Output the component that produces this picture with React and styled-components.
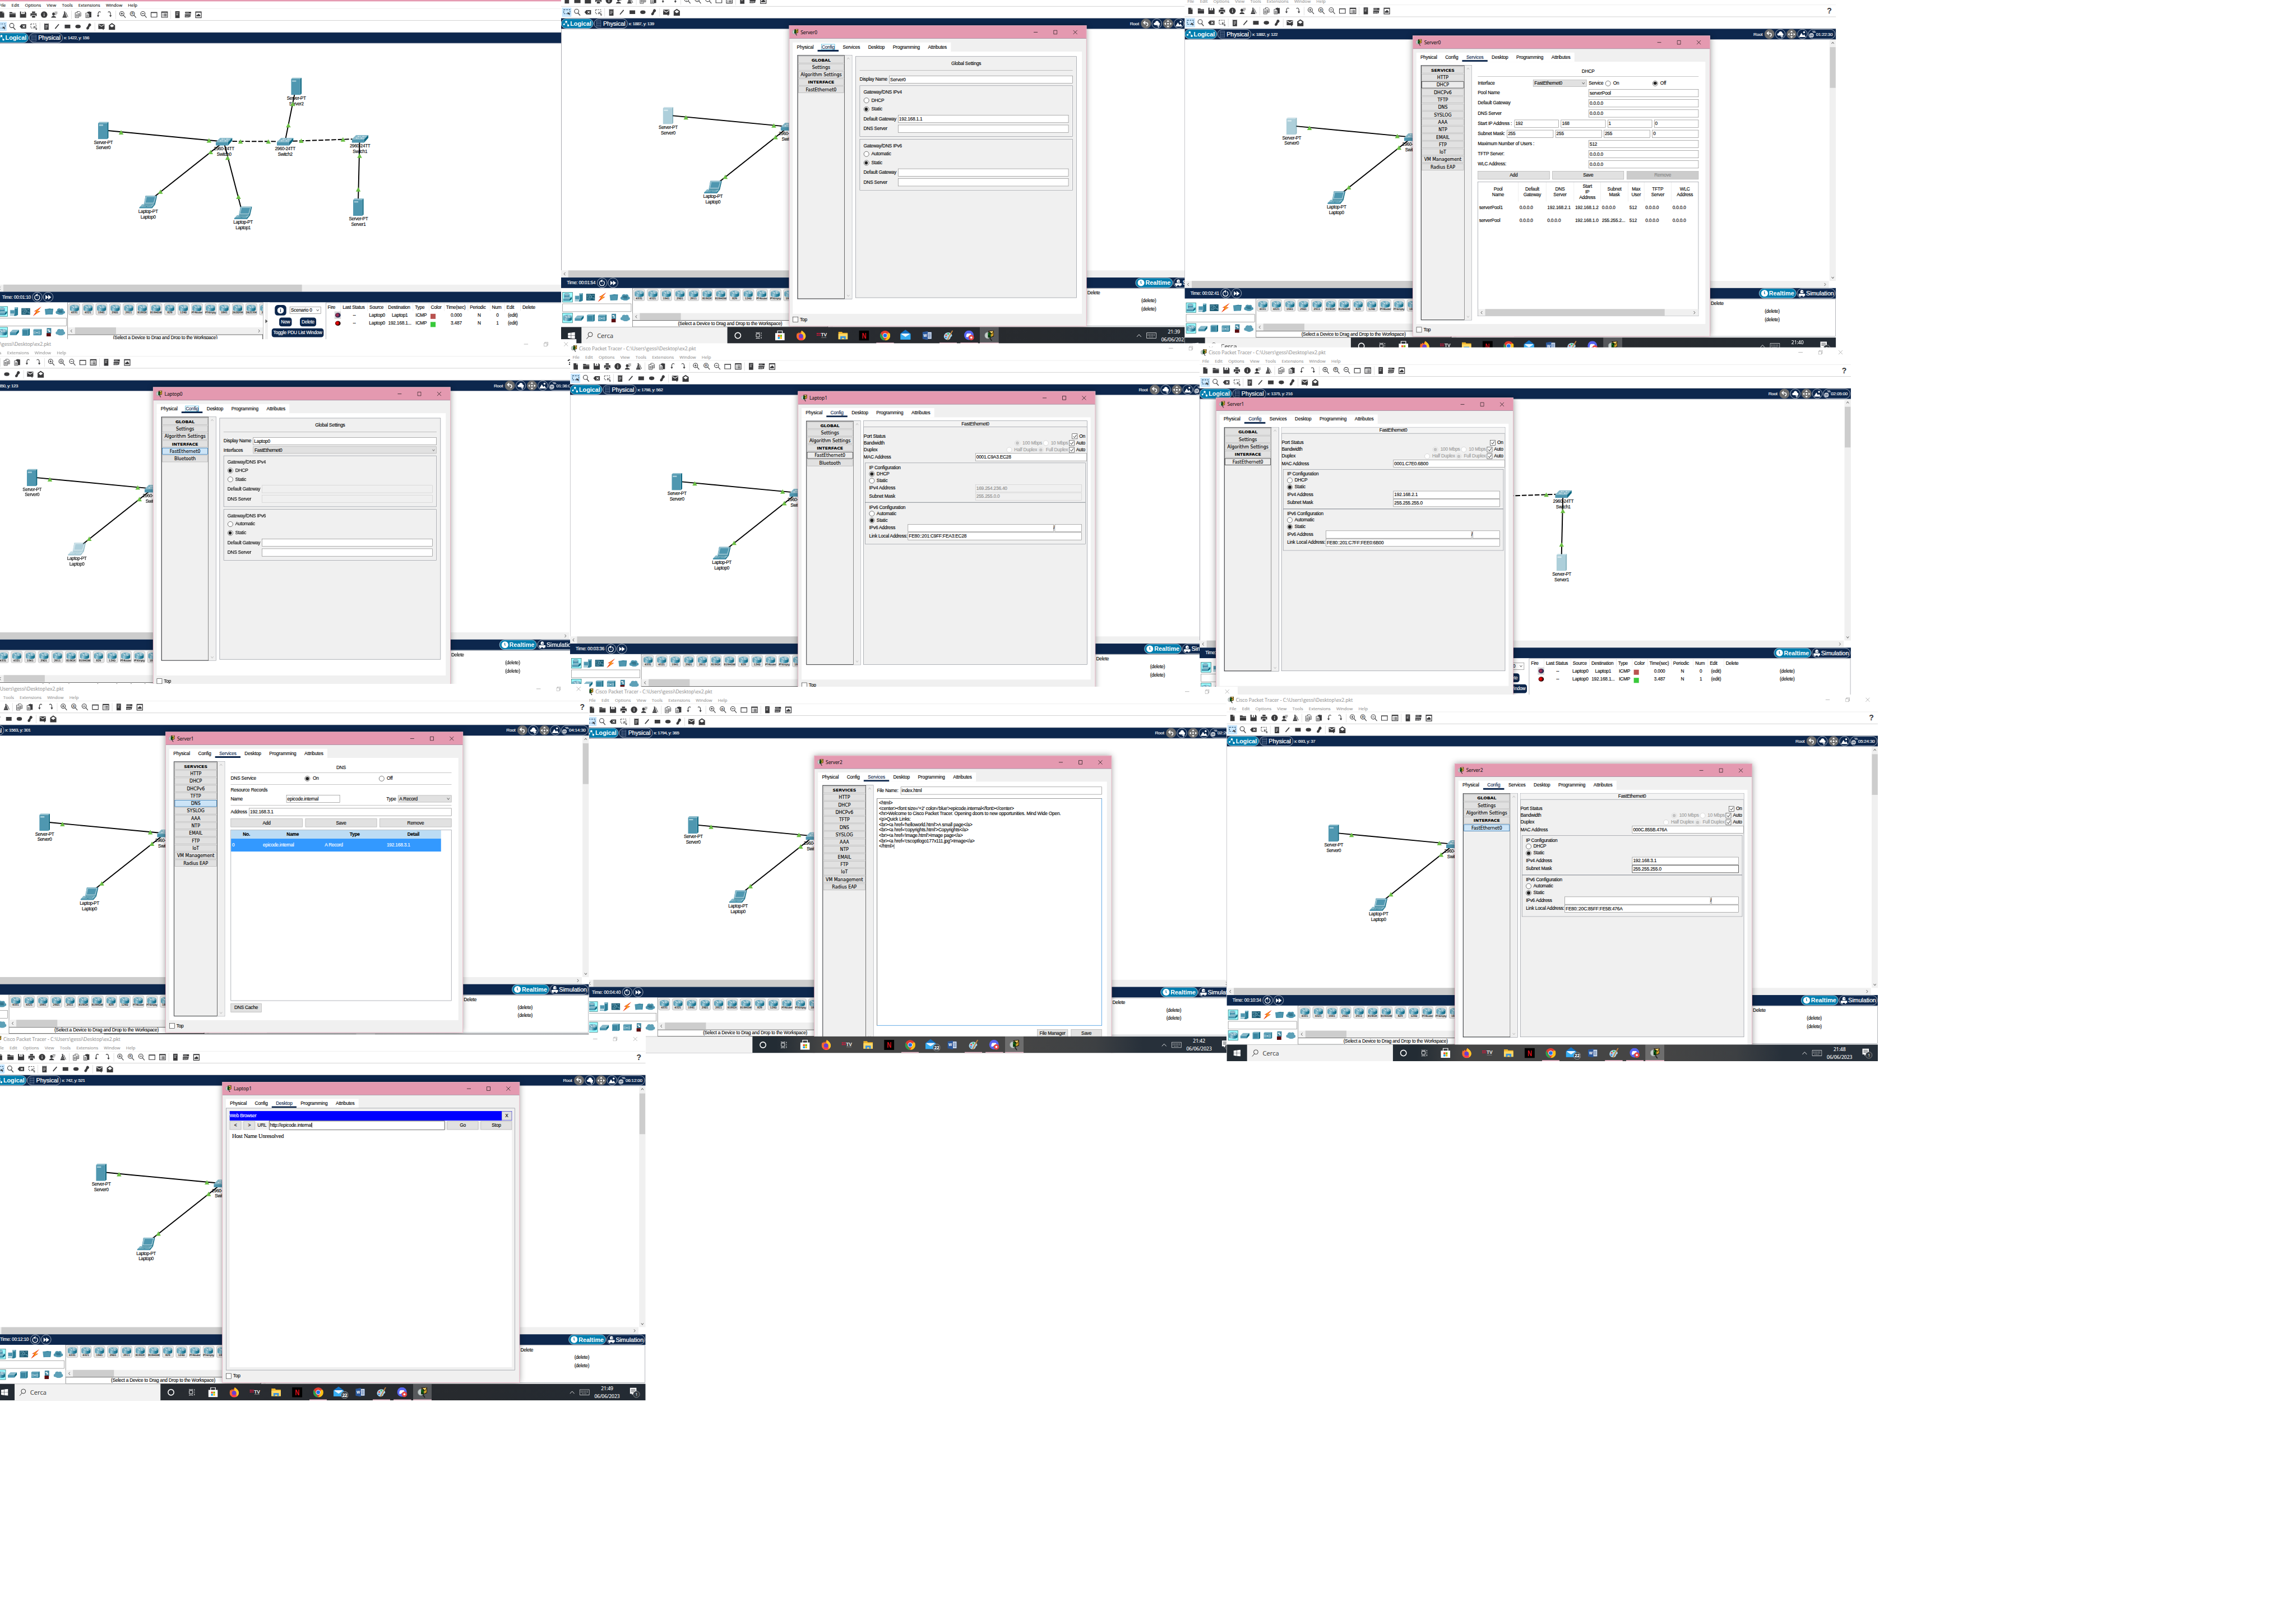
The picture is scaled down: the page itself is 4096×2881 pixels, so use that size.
import React from "react";
import styled, { createGlobalStyle, css } from "styled-components";

const ARIAL = '"Liberation Sans", Arial, sans-serif';
const SEGOE = '"Open Sans", "Noto Sans", sans-serif';
const TAHOMA = '"DejaVu Sans", Tahoma, sans-serif';

const PINK = "#e499b0";
const NAVY = "#0d274d";
const CYAN = "#007dae";
const INK = "#3a3a3c";
const FACE = "#f0f0f0";
const LINE = "#828790";

const GlobalStyle = createGlobalStyle`
  html, body { margin: 0; padding: 0; background: #fff; overflow: hidden; }
  *, *::before, *::after { box-sizing: border-box; }
`;

/* ---------- page ---------- */

const Page = styled.main`
  width: 4096px;
  height: 2881px;
  overflow: hidden;
  background: #fff;
`;

const Board = styled.div`
  position: relative;
  width: 6768px;
  height: 4760px;
  transform: scale(0.6052);
  transform-origin: 0 0;
  font-family: ${ARIAL};
  font-size: 13.8px;
  letter-spacing: -0.36px;
  line-height: 16px;
  color: #000;
  white-space: nowrap;
  -webkit-text-stroke: 0.2px currentColor;
`;

const Shot = styled.section`
  position: absolute;
  isolation: isolate;
  left: ${(p) => p.$x}px;
  top: ${(p) => p.$y}px;
  width: 1920px;
  height: 1080px;
  display: flex;
  flex-direction: column;
  background: #fff;
  overflow: hidden;
`;

/* ---------- main window chrome ---------- */

const TitleBar = styled.header`
  display: flex;
  align-items: center;
  flex: 0 0 30px;
  padding: 0 24px 0 3px;
  gap: 6px;
  font: 14.1px/18px ${SEGOE};
  letter-spacing: 0;
  color: #999;
  background: ${(p) => (p.$active ? PINK : "#fff")};
  border-bottom: 1px solid #fff;
`;

const TitleText = styled.span`
  flex: 1;
`;

const Controls = styled.div`
  display: flex;
  align-items: center;
  gap: ${(p) => p.$gap}px;
`;

const MenuBar = styled.nav`
  display: flex;
  align-items: center;
  flex: 0 0 21px;
  gap: 16.8px;
  padding-left: 8px;
  font: 12.8px/18px ${SEGOE};
  letter-spacing: 0;
  color: ${(p) => (p.$active ? "#111" : "#999")};
  border-bottom: 1px solid #e4e4e4;
`;

const ToolRow = styled.div`
  display: flex;
  align-items: center;
  flex: 0 0 35px;
  padding-left: 4px;
  border-bottom: 1px solid #b8b8b8;
`;

const Tool = styled.span`
  display: flex;
  align-items: center;
  justify-content: center;
  width: 25px;
  height: 24px;
  margin-right: 6px;
  background: ${(p) => (p.$on ? "#cce8ff" : "transparent")};
  outline: ${(p) => (p.$on ? "1px solid #99d1ff" : "none")};
`;

const Divider = styled.i`
  width: 1px;
  height: 25px;
  margin: 0 6px 0 0;
  background: #cfcfcf;
`;

const HelpMark = styled.b`
  margin-left: auto;
  padding-right: 13px;
  font: bold 23px/24px ${ARIAL};
  color: ${INK};
`;

const NavBar = styled.div`
  display: flex;
  align-items: center;
  flex: 0 0 31px;
  padding-right: 2px;
  background: ${NAVY};
  color: #fff;
  font-size: 13.4px;
`;

const Pill = styled.span`
  display: flex;
  align-items: center;
  justify-content: center;
  height: 29px;
  gap: ${(p) => p.$gap || 2}px;
  width: ${(p) => p.$w}px;
  border: 1.3px solid #fff;
  border-radius: 15px;
  background: ${(p) => (p.$on ? CYAN : NAVY)};
  font-size: ${(p) => (p.$on ? 17.8 : 17.6)}px;
  letter-spacing: 0;
  font-weight: ${(p) => (p.$on ? "bold" : "normal")};
  -webkit-text-stroke: ${(p) => (p.$on ? 0 : 0.4)}px #fff;
  margin-right: 2px;
  svg { flex: none; }
`;

const Coords = styled.span`
  flex: 1;
  padding-left: 1px;
  font-size: 13.2px;
  letter-spacing: -0.78px;
`;

const NavButton = styled.span`
  display: flex;
  align-items: center;
  justify-content: center;
  width: 30px;
  height: 29px;
  margin-left: 2.4px;
  border-radius: 15px;
  border: 1.3px solid ${(p) => (p.$grey ? "#6d6d6d" : "#fff")};
  background: ${(p) => (p.$grey ? "#6d6d6d" : NAVY)};
`;

const EnvClock = styled.span`
  display: flex;
  align-items: center;
  width: 80px;
  height: 29px;
  margin-left: 2px;
  border: 1.3px solid #fff;
  border-radius: 15px;
`;

/* ---------- workspace ---------- */

const WorkRow = styled.div`
  display: flex;
  flex: 0 0 712px;
  border-top: 1px solid #9a9eae;
  border-left: 1px solid #70707c;
`;

const Canvas = styled.div`
  position: relative;
  flex: 1;
  overflow: hidden;
`;

const Layer = styled.div`
  position: absolute;
  left: -1px;
  top: ${(p) => p.$dy - 1}px;
  width: 1899px;
  height: 712px;
`;

const Node = styled.div`
  position: absolute;
  left: ${(p) => p.$x - 50}px;
  top: ${(p) => p.$y - 152}px;
  width: 100px;
  display: flex;
  flex-direction: column;
  align-items: center;
  font-size: 13.5px;
  letter-spacing: -0.65px;
  line-height: 16px;
  svg { opacity: ${(p) => (p.$picked ? 0.46 : 1)}; margin-bottom: 2px; }
`;

const ArrowLayer = styled.svg`
  position: absolute;
  left: 0;
  top: 0;
`;

const VScroll = styled.div`
  display: flex;
  flex-direction: column;
  align-items: center;
  justify-content: space-between;
  width: ${(p) => p.$w || 19}px;
  padding: 5px 0;
  background: ${FACE};
`;

const VThumb = styled.i`
  width: 17px;
  height: 120px;
  margin: 8px 0 auto;
  background: #cdcdcd;
`;

const HScroll = styled.div`
  display: flex;
  align-items: center;
  flex: 0 0 ${(p) => p.$h}px;
  padding: 0 7px 0 6px;
  margin-right: ${(p) => p.$mr || 0}px;
  background: ${FACE};
`;

const HThumb = styled.i`
  width: ${(p) => p.$w}px;
  height: 100%;
  margin: 0 auto 0 6px;
  background: #cdcdcd;
`;

const TimeBar = styled.div`
  display: flex;
  align-items: center;
  flex: 0 0 31px;
  padding-left: 17px;
  background: ${NAVY};
  color: #fff;
  font-size: 13.5px;
`;

const TimeText = styled.span`
  width: 89px;
`;

const TimeSpace = styled.span`
  flex: 1;
`;

/* ---------- bottom panel ---------- */

const Bottom = styled.div`
  display: flex;
  flex: 0 0 115px;
`;

const Palette = styled.div`
  display: flex;
  flex-direction: column;
  width: 210px;
  padding: 12px 3px 0 4px;
`;

const PaletteRow = styled.div`
  display: flex;
  gap: 4px;
`;

const PaletteCell = styled.span`
  display: flex;
  align-items: center;
  justify-content: center;
  width: 30px;
  height: 30px;
  background: ${(p) => (p.$on ? "#99fbff" : "transparent")};
  border: ${(p) => (p.$on ? "1px solid #355" : "1px solid transparent")};
`;

const PaletteField = styled.div`
  height: 24px;
  margin: 4px 0 3px;
  border: 1px solid #777;
  background: #fff;
`;

const Devices = styled.div`
  display: flex;
  flex-direction: column;
  width: 576px;
  border-left: 1px solid #555;
  border-top: 1px solid ${LINE};
`;

const Tiles = styled.div`
  display: flex;
  flex: 0 0 73px;
  gap: 6px;
  padding: 2px 0 0 2px;
  overflow: hidden;
`;

const Tile = styled.div`
  display: flex;
  flex: 0 0 34px;
  flex-direction: column;
  align-items: center;
  justify-content: space-between;
  height: 35px;
  padding: 3px 0 2px;
  border: 1px solid #b4b4b4;
  border-radius: 5px;
  background: #e2e2e2;
  font: 7.6px/8px ${TAHOMA};
  letter-spacing: ${(p) => (p.$tight ? -0.5 : 0)}px;
`;

const Hint = styled.div`
  margin-top: 1px;
  height: 20px;
  border: 1.5px solid #000;
  border-left: 0;
  text-align: center;
  line-height: 18px;
`;

const Splitter = styled.div`
  display: flex;
  align-items: center;
  justify-content: center;
  width: 20px;
  padding-bottom: 4px;
  background: linear-gradient(90deg, #fff 6px, ${FACE} 6px 14px, #fff 14px);
  border-left: 1px solid #999;
`;

const Scenario = styled.div`
  display: flex;
  flex-direction: column;
  align-items: center;
  width: 165px;
  padding-top: 8px;
  gap: 6px;
`;

const ScenarioRow = styled.div`
  display: flex;
  align-items: center;
  justify-content: center;
  gap: ${(p) => p.$gap}px;
`;

const NavyButton = styled.span`
  padding: 5px;
  border-radius: 7px;
  background: ${NAVY};
  color: #fff;
  line-height: 16px;
  height: 26px;
`;

const InfoButton = styled.span`
  display: flex;
  align-items: center;
  justify-content: center;
  width: 34px;
  height: 31px;
  border-radius: 9px;
  background: ${NAVY};
`;

const Pdu = styled.div`
  flex: 1;
  margin: 1px 1px 3px 0;
  border: 1px solid ${LINE};
`;

const PduRow = styled.div`
  display: grid;
  grid-template-columns: 44px 79px 55px 79px 47px 45px 70px 65px 43px 47px 1fr;
  align-items: center;
  height: 24px;
  text-align: center;
`;

const PduHead = styled.span`
  height: 24px;
  padding-left: 5px;
  line-height: 26px;
  text-align: left;
  border-right: 1px solid #e2e2e2;
  &:last-child { border: 0; }
`;

const FireCell = styled.span`
  display: flex;
  align-items: center;
  justify-content: center;
  justify-self: end;
  width: 19px;
  height: 22px;
  background: ${(p) => (p.$on ? "#d9d9d9" : "transparent")};
`;

const FireDot = styled.i`
  width: 16px;
  height: 14px;
  border-radius: 50%;
  background: radial-gradient(circle at 40% 45%, ${(p) => p.$c} 22%, ${(p) => p.$edge} 62%);
`;

const Swatch = styled.i`
  width: 15px;
  height: 15px;
  margin: 7px 0 0 4px;
  background: ${(p) => p.$c};
`;

/* ---------- taskbar ---------- */

const Taskbar = styled.footer`
  display: flex;
  align-items: stretch;
  position: relative;
  z-index: 2;
  flex: 0 0 49px;
  background: ${(p) =>
    p.$glow
      ? "linear-gradient(90deg,#232c34 0 560px,#454545 700px 1290px,#3d4043 1500px,#27303a 1640px,#27303a)"
      : "linear-gradient(90deg,#232b33,#292c31 700px,#272a2e 1400px,#232b34)"};
  color: #fff;
`;

const StartCell = styled.span`
  display: flex;
  align-items: center;
  justify-content: center;
  width: 60px;
`;

const SearchCell = styled.span`
  display: flex;
  align-items: center;
  gap: 11px;
  width: 430px;
  padding-left: 13px;
  background: #f2f2f2;
  border-top: 1px solid #c9c9c9;
  color: #444;
  font: 18.2px/24px ${SEGOE};
  letter-spacing: 0;
`;

const AppCell = styled.span`
  display: flex;
  align-items: center;
  justify-content: center;
  width: ${(p) => p.$w || 62}px;
  padding-top: 1px;
  background: ${(p) => (p.$front ? "rgba(255,255,255,.22)" : "transparent")};
  box-shadow: ${(p) => (p.$open ? "inset 0 -3px 0 #edbccb" : "none")};
  background-clip: padding-box;
  border: solid transparent;
  border-width: 0 ${(p) => (p.$front ? 0 : 5)}px;
`;

const Tray = styled.span`
  display: flex;
  align-items: center;
  margin-left: auto;
  padding-right: 16px;
`;

const Clock = styled.span`
  display: flex;
  flex-direction: column;
  align-items: center;
  margin: 0 26px 0 14px;
  font: 14.1px/23px ${SEGOE};
  letter-spacing: 0;
`;

/* ---------- device dialog ---------- */

const DialogBox = styled.article`
  position: absolute;
  left: ${(p) => p.$x}px;
  top: ${(p) => p.$y}px;
  width: 877px;
  height: 887px;
  display: flex;
  flex-direction: column;
  border: 1px solid ${PINK};
  background: ${FACE};
  box-shadow: 0 0 18px rgba(0, 0, 0, 0.42);
`;

const DialogTitle = styled.header`
  display: flex;
  align-items: center;
  gap: 7px;
  flex: 0 0 38px;
  padding: 0 26px 0 8px;
  background: ${PINK};
  border-bottom: 1px solid #8d8fa0;
  font: 13.8px/18px ${SEGOE};
  letter-spacing: 0;
  color: #111;
`;

const TabBar = styled.div`
  display: flex;
  align-self: flex-start;
  margin: 11px 0 0 10px;
  height: 27px;
  background: #fff;
`;

const Tab = styled.span`
  padding: 6px 12px 0;
  border-bottom: 5px solid ${(p) => (p.$on ? NAVY : "transparent")};
  color: ${(p) => (p.$on ? NAVY : "#000")};
  line-height: 16px;
  height: 27px;
  letter-spacing: -0.28px;
`;

const TabLabel = styled.span`
  outline: ${(p) => (p.$focus ? "1.5px solid #1ba7d6" : "none")};
`;

const Content = styled.div`
  display: flex;
  align-items: flex-start;
  flex: 0 0 773px;
  margin: 0 13px 0 10px;
  padding: 10px 0 0 13px;
  background: #fff;
`;

const WebContent = styled(Content)`
  flex-direction: column;
  align-items: stretch;
  padding: 8px 8px 8px 10px;
  background: ${FACE};
  border: 1px solid ${LINE};
`;

const TopRow = styled.label`
  display: flex;
  align-items: center;
  gap: 5px;
  padding: 9px 0 0 10px;
`;

const CheckBox = styled.span`
  display: flex;
  align-items: center;
  justify-content: center;
  flex: none;
  width: 16px;
  height: 16px;
  border: 1.2px solid #222;
  background: #fff;
`;

const Side = styled.aside`
  display: flex;
  flex: 0 0 ${(p) => p.$w}px;
  height: ${(p) => p.$h}px;
  border: 1px solid ${LINE};
  background: ${FACE};
`;

const SideList = styled.div`
  flex: 1;
  display: flex;
  flex-direction: column;
  gap: 2px;
  padding: 2px 1px;
  border: 1.4px solid #000;
`;

const SideItem = styled.span`
  height: 20px;
  line-height: 19px;
  text-align: center;
  font-family: ${TAHOMA};
  letter-spacing: 0;
  font-size: ${(p) => (p.$head ? 12.7 : 13)}px;
  font-weight: ${(p) => (p.$head ? "bold" : "normal")};
  border: 1px solid #adadad;
  background: #e1e1e1;
  ${(p) => p.$look === "blue" && css`background: #cce4f7; border-color: #005499;`}
  ${(p) => p.$look === "ring" && css`background: #ececec; border: 1.4px solid #000;`}
`;

const Radio = styled.i`
  display: inline-flex;
  align-items: center;
  justify-content: center;
  flex: none;
  width: 16px;
  height: 16px;
  border: 1.2px solid ${(p) => (p.$dim ? "#c4c4c4" : "#222")};
  border-radius: 50%;
  background: #fff;
  &::after {
    content: "";
    width: 9.5px;
    height: 9.5px;
    border-radius: 50%;
    background: ${(p) => (p.$on ? (p.$dim ? "#c4c4c4" : "#222") : "transparent")};
  }
`;

const Field = styled.span`
  height: 23px;
  width: ${(p) => (p.$w ? p.$w + "px" : "auto")};
  flex: ${(p) => (p.$w ? "none" : 1)};
  padding-left: 2px;
  line-height: 21px;
  border: ${(p) => (p.$focus ? "1.4px solid #000" : "1px solid " + (p.$dim ? "#ccc" : "#7a7a7a"))};
  background: ${(p) => (p.$dim ? FACE : "#fff")};
  color: ${(p) => (p.$dim ? "#8a8a8a" : "#000")};
`;

const UrlField = styled(Field)`
  height: 27px;
  line-height: 24px;
`;

const Select = styled.span`
  display: flex;
  align-items: center;
  justify-content: space-between;
  height: 21px;
  width: ${(p) => (p.$w ? p.$w + "px" : "auto")};
  flex: ${(p) => (p.$w ? "none" : 1)};
  padding: 0 4px 0 3px;
  border: 1px solid ${(p) => (p.$white ? "#777" : "#adadad")};
  background: ${(p) => (p.$white ? "#fff" : "#e1e1e1")};
`;

const Button = styled.span`
  display: flex;
  align-items: center;
  justify-content: center;
  height: ${(p) => p.$h || 25}px;
  width: ${(p) => (p.$w ? p.$w + "px" : "auto")};
  flex: ${(p) => (p.$w ? "none" : 1)};
  border: 1px solid ${(p) => (p.$dim ? "#bfbfbf" : "#adadad")};
  background: ${(p) => (p.$dim ? "#ccc" : "#e1e1e1")};
  color: ${(p) => (p.$dim ? "#838383" : "#000")};
`;

const ButtonRow = styled.div`
  display: flex;
  gap: 8px;
  margin-top: ${(p) => p.$mt}px;
`;

const Line = styled.div`
  display: flex;
  align-items: center;
  height: ${(p) => p.$h}px;
  margin-top: ${(p) => p.$mt || 0}px;
  gap: ${(p) => p.$gap || 0}px;
`;

const Label = styled.span`
  flex: 0 0 ${(p) => (p.$w ? p.$w + "px" : "auto")};
  padding: 0 ${(p) => p.$pr || 0}px 0 ${(p) => p.$pl || 0}px;
`;

const Push = styled.span`
  flex: 1;
`;

const SettingsPanel = styled.div`
  width: 652px;
  height: 712px;
  margin: 4px 0 0 10px;
  padding: 0 11px;
  border: 1px solid ${LINE};
  background: ${FACE};
`;

const Heading = styled.div`
  height: ${(p) => p.$h}px;
  padding-top: ${(p) => p.$pt}px;
  text-align: center;
  border-bottom: 1px solid #a0a0a0;
`;

const Group = styled.div`
  height: ${(p) => p.$h}px;
  margin: ${(p) => p.$m};
  padding: ${(p) => p.$p};
  border: 1px solid ${LINE};
  box-shadow: inset -1px -1px 0 #fff;
`;

const PortPanel = styled.div`
  width: 660px;
  height: 719px;
  margin-left: 7px;
  border: 1px solid ${LINE};
  background: ${FACE};
`;

const PortHeading = styled.div`
  height: 18px;
  line-height: 17px;
  margin-bottom: 17px;
  text-align: center;
  border-bottom: 1px solid ${LINE};
  background: #f4f4f4;
`;

const Dim = styled.span`
  padding-left: 4px;
  color: #9a9a9a;
`;

const ServicePanel = styled.div`
  display: flex;
  flex-direction: column;
  width: 651px;
  margin-left: 17px;
`;

const Rule = styled.i`
  height: 1px;
  background: #a0a0a0;
`;

const PoolTable = styled.div`
  display: flex;
  flex-direction: column;
  height: 396px;
  margin-top: 7px;
  border: 1px solid ${LINE};
`;

const PoolRow = styled.div`
  display: grid;
  grid-template-columns: 119px 82px 82px 79px 81px 47px 80px 1fr;
  align-items: center;
  height: ${(p) => p.$h}px;
`;

const PoolHead = styled.span`
  display: flex;
  align-items: center;
  justify-content: center;
  height: 100%;
  text-align: center;
  white-space: pre-line;
  border-right: 1px solid #e5e5e5;
  &:last-child { border: 0; }
`;

const PoolCell = styled.span`
  padding-left: 3px;
`;

const RecordTable = styled.div`
  height: 504px;
  margin: 8px 0;
  border: 1px solid ${LINE};
`;

const RecordRow = styled.div`
  display: grid;
  grid-template-columns: 91px 182px 183px 1fr;
  align-items: center;
  width: 619px;
  height: ${(p) => (p.$head ? 25 : 38)}px;
  background: ${(p) => (p.$head ? "#bcdcf4" : "#3399ff")};
  color: ${(p) => (p.$head ? "#000" : "#fff")};
  font-weight: ${(p) => (p.$head ? "bold" : "normal")};
  text-align: ${(p) => (p.$head ? "center" : "left")};
  text-indent: ${(p) => (p.$head ? 0 : 3)}px;
`;

const FilePanel = styled.div`
  display: flex;
  flex-direction: column;
  width: 663px;
  margin-left: 10px;
  padding-top: 5px;
`;

const Editor = styled.pre`
  height: 670px;
  margin: 11px 0;
  padding: 5px;
  border: 1px solid #0078d7;
  border-left-color: #333;
  border-top-color: #555;
  font-family: ${ARIAL};
  font-size: inherit;
  line-height: 16px;
`;

const WebTitle = styled.div`
  display: flex;
  align-items: center;
  justify-content: space-between;
  height: 28px;
  background: #0000ff;
  color: #fff;
  padding-right: 1px;
`;

const WebPage = styled.div`
  flex: 1;
  padding: 10px 7px;
  background: #fff;
  font: 17px/18px "Liberation Serif", serif;
`;

/* ---------- small drawings ---------- */

const Chevron = ({ dir = "down", size = 9, color = "#444" }) => {
  const d = { down: "M1 2l3.5 5L8 2", up: "M1 7l3.5-5L8 7", left: "M6.5 0L2.5 4.5 6.5 9", right: "M2.5 0l4 4.5-4 4.5" }[dir];
  return (
    <svg width={size} height={size} viewBox="0 0 9 9" fill="none" stroke={color} strokeWidth="1.4">
      <path d={d} />
    </svg>
  );
};

const AppLogo = ({ w = 18, h = 20 }) => (
  <svg width={w} height={h} viewBox="0 0 18 20">
    <path d="M7 1L18 0v11l-7 3z" fill="#1d1608" />
    <path d="M9 2l8-1-3 5z" fill="#f5d36a" />
    <path d="M8 3l6 4 3-5v8l-6 3z" fill="#cf9f2a" />
    <path d="M8 3l6 4 3-5" fill="none" stroke="#3b2a06" strokeWidth=".8" />
    <ellipse cx="6" cy="9.500" rx="5.500" ry="6" fill="#c4ccca" stroke="#8f9a9a" />
    <path d="M6.500 4H12v9.500H6.500z" fill="#07320b" />
    <path d="M7.500 5.500h1.500V8H7.500zM10 8h1v3h-1z" fill="#1fa82c" />
    <path d="M10 14l4 6" stroke="#222" strokeWidth="1.800" />
  </svg>
);

const WindowControls = ({ color, gap }) => (
  <Controls $gap={gap}>
    <svg width="12" height="14"><path d="M0 7h12" stroke={color} strokeWidth="1.2" /></svg>
    <svg width="12" height="14"><path d="M1 1.500h10v11H1z" stroke={color} fill="none" strokeWidth="1.2" /></svg>
    <svg width="13" height="14"><path d="M.5 1l12 12M12.500 1l-12 12" stroke={color} strokeWidth="1.2" /></svg>
  </Controls>
);

const MainControls = () => (
  <Controls $gap={46}>
    <svg width="13" height="13"><path d="M0 6.500h13" stroke="#888" /></svg>
    <svg width="13" height="13" fill="none" stroke="#888"><path d="M.5 3.500h9v9h-9zM3 3.500v-3h9v9H9.500" /></svg>
    <svg width="13" height="13"><path d="M.5.5l12 12M12.500.5l-12 12" stroke="#888" /></svg>
  </Controls>
);

const GLYPHS = {
  file: <path d="M5 2h9v5h5v15H5zM15.500 2v4H19z" />,
  folder: <path d="M2 4h8l2 2.500h10V9H2zM2 10h20v11H2z" />,
  save: <path fillRule="evenodd" d="M2 2h16l4 4v16H2zM6 2v8h11V2zM10.500 3.500h2.500v5h-2.500z" />,
  print: <path fillRule="evenodd" d="M7 2h10v5H7zM2 8h20v9h-3.500v-3.500h-13V17H2zM7 15h10v7H7z" />,
  info: (
    <>
      <circle cx="12" cy="12" r="10.500" />
      <path d="M11 6.500h2V9h-2zM11 10.500h2v7h-2z" fill="#fff" />
    </>
  ),
  user: (
    <>
      <ellipse cx="8.500" cy="10" rx="4.200" ry="5" />
      <path d="M1 22c1-5 5-4 6-6h3c1 2 6 1 7 6z" />
      <path d="M12 4h9M12 8h9M12 12h6" stroke={INK} strokeWidth="1.400" />
    </>
  ),
  flask: (
    <>
      <path fillRule="evenodd" d="M8 2h4v5l6 15H3l6-15zM9.500 12h1.500v2H9.500zM7.500 16h1.500v2H7.500zM12 16h1.500v2H12z" />
      <path d="M14 5l7 15" stroke={INK} strokeWidth="1.800" />
    </>
  ),
  copy: (
    <g fill="#fff" stroke={INK} strokeWidth="1.500">
      <path d="M9 2h8l4 4v11H9z" />
      <path d="M3 6h7l4 4v12H3z" />
      <path d="M5 12h7M5 15h7M5 18h7M15 8h4M15 11h4M15 14h4" />
    </g>
  ),
  paste: (
    <>
      <path d="M8 3h4l2-2 2 2h5v18H8z" />
      <path d="M3 7h7l4 4v11H3z" fill="#fff" stroke={INK} strokeWidth="1.500" />
      <path d="M5 13h7M5 16h7M5 19h7" stroke={INK} strokeWidth="1.500" />
    </>
  ),
  undo: (
    <>
      <path d="M17 5c-1-3-7-4-8 3v8" fill="none" stroke={INK} strokeWidth="2" />
      <path d="M5 14h8l-4 6z" />
    </>
  ),
  redo: (
    <>
      <path d="M7 5c1-3 7-4 8 3v8" fill="none" stroke={INK} strokeWidth="2" />
      <path d="M11 14h8l-4 6z" />
    </>
  ),
  zoomIn: (
    <g fill="none" stroke={INK} strokeWidth="2">
      <circle cx="10" cy="9" r="7" /><path d="M15 14l7 8M6.500 9h7M10 5.500v7" />
    </g>
  ),
  zoomReset: (
    <>
      <g fill="none" stroke={INK} strokeWidth="2"><circle cx="10" cy="9" r="7" /><path d="M15 14l7 8" /></g>
      <text x="10" y="12.800" fontSize="10" fontWeight="bold" textAnchor="middle">R</text>
    </>
  ),
  zoomOut: (
    <g fill="none" stroke={INK} strokeWidth="2">
      <circle cx="10" cy="9" r="7" /><path d="M15 14l7 8M6.500 9h7" />
    </g>
  ),
  windowBox: <path d="M2.500 5h19v15h-19z M2 6h20" fill="none" stroke={INK} strokeWidth="2" />,
  listBox: (
    <>
      <path d="M2.500 3h19v18h-19z M2 5h20" fill="none" stroke={INK} strokeWidth="2" />
      <path d="M6 10h2M10 10h9M6 13.500h2M10 13.500h9M6 17h2M10 17h9" stroke={INK} strokeWidth="2" />
    </>
  ),
  tower: (
    <>
      <path d="M5 1h14v22H5z" />
      <path d="M8 6h8M8 10h6M8 13h6" stroke="#ddd" strokeWidth="1.500" />
    </>
  ),
  cluster: (
    <>
      <path d="M3 3h19v6H3zM2 11h20l-2 4H2z" />
      <path d="M2 16h13v5H2zM16 16l4-2v5l-4 2z" />
      <path d="M5 6h10M4 18.500h9" stroke="#ddd" strokeWidth="1.300" />
    </>
  ),
  cloudBox: (
    <>
      <path d="M3 3h18v19H3z M3 4.500h18" fill="none" stroke={INK} strokeWidth="2.200" />
      <path d="M6 18c-2-4 1-6 3-5 1-5 7-4 7 0 3 0 3 5 0 5z" />
    </>
  ),
  select: (
    <>
      <path d="M2 4h20v13H2z" fill="none" stroke="#26506e" strokeWidth="2" strokeDasharray="5 3" />
      <path d="M14 12l8 3-3 1.500 3 4-2 1-3-4-2 2z" />
    </>
  ),
  magnify: (
    <g fill="none" stroke={INK} strokeWidth="2">
      <circle cx="9.500" cy="9" r="7" /><path d="M14 14.500l7 8" strokeWidth="2.500" />
    </g>
  ),
  erase: (
    <>
      <path d="M1 12l6-7h15v14H7z" />
      <path d="M11 8.500l7 7M18 8.500l-7 7" stroke="#fff" strokeWidth="2" />
    </>
  ),
  resize: (
    <>
      <path d="M3 4h17v13H3z" fill="none" stroke={INK} strokeWidth="1.800" strokeDasharray="4 3" />
      <path d="M13 12l9 10M13 12l5 1M13 12v5M22 22l-4-1M22 22v-5" stroke={INK} strokeWidth="1.500" />
    </>
  ),
  note: (
    <>
      <path d="M5 2h2v2h2V2h2v2h2V2h2v2h2V2h2v21H5z" />
      <path d="M8 9h8M8 13h8M8 17h5" stroke="#fff" strokeWidth="1.500" />
    </>
  ),
  stroke: <path d="M6 19L18 5" stroke={INK} strokeWidth="3" />,
  box: <path d="M3 6h18v12H3z" />,
  oval: <ellipse cx="12" cy="12" rx="8.500" ry="6" />,
  blob: <path d="M13 3c4-3 10 3 6 7-3 3-4 2-5 7-1 6-9 7-9 1 0-4 4-5 5-8 1-4 1-5 3-7z" />,
  mail: (
    <>
      <path d="M2 4h20v16h-3v4l-4-4H2z" />
      <path d="M3 6l9 6 9-6" fill="none" stroke="#fff" strokeWidth="2" />
    </>
  ),
  mailOpen: (
    <>
      <path d="M2 8l10-7 10 7v15H2z" />
      <path d="M5 10l7-5 7 5-7 5z" fill="#fff" />
    </>
  ),
};

const Glyph = ({ name }) => (
  <svg width="22" height="22" viewBox="0 0 24 24" fill={INK} fontFamily="Liberation Sans">
    {GLYPHS[name]}
  </svg>
);

const ServerIcon = () => (
  <svg width="31" height="51" viewBox="0 0 31 51">
    <path d="M0 4l4-4h27l-4 4z" fill="#8cbccb" />
    <path d="M27 4l4-4v47l-4 4z" fill="#0c6781" />
    <path d="M0 4h27v47H0z" fill="#4f97b0" />
    <path d="M3 8h12v4H3z" fill="#a9cfdb" />
  </svg>
);

const SwitchIcon = () => (
  <svg width="49" height="23" viewBox="0 0 49 23">
    <path d="M0 13L13 0h36L36 13z" fill="#86b9ca" />
    <path d="M36 13L49 0v8L36 23z" fill="#0c6781" />
    <path d="M0 13h36v10H0z" fill="#4f97b0" />
    <path d="M17 4h9M31 4h9M12 9h9M26 9h9" stroke="#fff" strokeWidth="1.600" strokeDasharray="5 2" />
  </svg>
);

const LaptopIcon = () => (
  <svg width="53" height="37" viewBox="0 0 53 37">
    <path d="M19 0h34l-6 26-9 11H0l8-10 7-1z" fill="#0c6781" />
    <path d="M19 0h32l-6 24H14z" fill="#86b9ca" />
    <path d="M22 3h26l-5 18H18z" fill="#4f97b0" stroke="#fff" strokeWidth=".6" />
    <path d="M9 25h37L38 33H2z" fill="#86b9ca" />
    <path d="M1 33h37v4H0z" fill="#4f97b0" />
    <path d="M16 27.500h21M13 30h21M20 32h5" stroke="#0c6781" strokeDasharray="3 1.500" />
  </svg>
);

const TEAL = "#4f97b0";

const RouterArt = ({ w = 29, h = 22 }) => (
  <svg width={w} height={h} viewBox="0 0 29 22">
    <defs>
      <linearGradient id="drum">
        <stop offset="0" stopColor="#3f8fab" />
        <stop offset=".3" stopColor="#a5cfdc" />
        <stop offset=".65" stopColor="#2f86a3" />
        <stop offset="1" stopColor="#0c6781" />
      </linearGradient>
    </defs>
    <path d="M0 6v10c0 8 29 8 29 0V6z" fill="url(#drum)" />
    <ellipse cx="14.500" cy="6.500" rx="14.500" ry="6.300" fill="#74adc1" />
    <path d="M5 4l8 4M24 4l-8 3M9 9.500l5-1M15 3.500l5-1M17 9l5 1" stroke="#fff" strokeWidth="1.300" />
  </svg>
);

const PALETTE_TOP = [
  <svg width="26" height="26" viewBox="0 0 26 26"><path d="M3 4c0-4 16-4 16 0v10H3z" fill="#3f8fab" /><ellipse cx="11" cy="5" rx="8" ry="3.500" fill="#8cbccb" /><path d="M0 18l7-6h19l-7 6z" fill="#86b9ca" /><path d="M0 18h19v6H0z" fill={TEAL} /><path d="M19 18l7-6v6l-7 6z" fill="#0c6781" /></svg>,
  <svg width="26" height="28" viewBox="0 0 26 28"><path d="M14 2h10v22l-6 3h-6l2-8z" fill="#2c7e98" /><path d="M1 10h13v11H1z" fill={TEAL} stroke="#9cc7d5" /><path d="M14 2h8v4h-8zM0 23h12v3H0z" fill="#86b9ca" /></svg>,
  <svg width="26" height="20" viewBox="0 0 26 20"><path d="M0 0h26v20H0z" fill="#1c5a72" /><path d="M2 3h12M2 7h5M10 6h6v6h-6zM18 4h5M3 12h5M3 16h10M18 12h5v5" stroke="#7fb5c8" strokeWidth="1.500" fill="none" /></svg>,
  <svg width="28" height="28" viewBox="0 0 28 28"><path d="M26 0L4 14h7L1 28l22-15h-8z" fill="#ee3d12" /><path d="M20 5L9 13h6L8 22l11-8h-7z" fill="#ffd21a" /></svg>,
  <svg width="26" height="20" viewBox="0 0 26 20"><path d="M1 3l17-2v17L3 20z" fill={TEAL} /><path d="M8 4l5-2h13l-2 17H6z" fill="#2c7e98" /><path d="M8 4h16l-2 15H6z" fill={TEAL} /></svg>,
  <svg width="29" height="20" viewBox="0 0 29 20"><path d="M6 18c-8 0-8-9-2-10C4 1 11-1 15 2c5-3 11 1 9 6 7 1 6 9 0 9-2 4-14 4-18 1z" fill={TEAL} /><path d="M8 7h12M6 10h15M10 13h11" stroke="#1c5a72" strokeWidth="1.500" /></svg>,
];

const PALETTE_LOW = [
  <RouterArt w={26} h={20} />,
  <svg width="27" height="17" viewBox="0 0 27 17"><path d="M0 9l8-8h19l-8 8z" fill="#86b9ca" /><path d="M0 9h19v8H0z" fill={TEAL} /><path d="M19 9l8-8v7l-8 9z" fill="#0c6781" /></svg>,
  <svg width="23" height="22" viewBox="0 0 23 22"><path d="M0 3l4-3h19l-4 3z" fill="#86b9ca" /><path d="M0 3h19v19H0z" fill={TEAL} /><path d="M19 3l4-3v19l-4 3z" fill="#0c6781" /><path d="M5 6v13M9 6v13M13 6v13" stroke="#1c6a84" strokeWidth="1.500" /></svg>,
  <svg width="25" height="20" viewBox="0 0 25 20"><path d="M0 3l3-3h22l-3 3z" fill="#86b9ca" /><path d="M0 3h22v17H0z" fill={TEAL} /><path d="M22 3l3-3v17l-3 3z" fill="#0c6781" /><path d="M4 7c-2 3-2 6 0 9M7 8c-1 2-1 5 0 7M18 7c2 3 2 6 0 9M15 8c1 2 1 5 0 7" stroke="#fff" fill="none" /><circle cx="11" cy="11.500" r="1.700" fill="#fff" /></svg>,
  <svg width="15" height="26" viewBox="0 0 15 26"><path d="M1 1h13v16H1z" fill="#4287a0" /><path d="M0 16h13v10H0z" fill="#5c0d10" /><path d="M3 5h6v3H3zM6 9h5v3H6z" fill="#fff" /></svg>,
  <svg width="28" height="20" viewBox="0 0 28 20"><path d="M6 17c-8 0-8-8-2-9C4 1 11-1 15 2c5-3 11 1 9 6 6 1 5 9 0 9-3 4-14 4-18 0z" fill="#5da0b7" /></svg>,
];

/* ---------- network diagram ---------- */

const LINKS = [
  { a: [329, 408], b: [655, 439] },
  { a: [659, 450], b: [466, 603] },
  { a: [672, 446], b: [721, 634] },
  { a: [696, 439.5], b: [830, 440], dash: true },
  { a: [874, 439], b: [1050, 433], dash: true },
  { a: [853, 431], b: [879, 302] },
  { a: [1071, 440], b: [1067, 610] },
];

const ARROWS = [
  [368, 413], [627, 437], [632, 471], [484, 588], [682, 488], [714, 603], [720, 440], [802, 440],
  [899, 438], [1022, 434], [861, 392], [874, 329], [1071, 482], [1067, 581],
];

const NODES = [
  { id: "Server0", kind: "Server-PT", x: 315.5, y: 382, art: ServerIcon },
  { id: "Server2", kind: "Server-PT", x: 884.5, y: 252, art: ServerIcon },
  { id: "Server1", kind: "Server-PT", x: 1067.5, y: 608, art: ServerIcon },
  { id: "Switch0", kind: "2960-24TT", x: 671.5, y: 429, art: SwitchIcon },
  { id: "Switch2", kind: "2960-24TT", x: 851.5, y: 429, art: SwitchIcon },
  { id: "Switch1", kind: "2960-24TT", x: 1072, y: 420.5, art: SwitchIcon },
  { id: "Laptop0", kind: "Laptop-PT", x: 447.5, y: 600, art: LaptopIcon },
  { id: "Laptop1", kind: "Laptop-PT", x: 727.5, y: 632, art: LaptopIcon },
];

const Network = ({ dy, picked }) => (
  <Layer $dy={dy}>
    <svg width="1899" height="712" viewBox="0 152 1899 712">
      {LINKS.map(({ a, b, dash }, i) => (
        <line key={i} x1={a[0]} y1={a[1]} x2={b[0]} y2={b[1]} stroke="#000" strokeWidth="3.200" strokeDasharray={dash ? "14 5" : "none"} />
      ))}
    </svg>
    {NODES.map(({ id, kind, x, y, art: Art }) => (
      <Node key={id} $x={x} $y={y} $picked={picked === id}>
        <Art />
        <span>{kind}</span>
        <span>{id}</span>
      </Node>
    ))}
    <ArrowLayer width="1899" height="712" viewBox="0 152 1899 712">
      {ARROWS.map(([x, y], i) => (
        <path key={i} d={`M${x} ${y - 6.5}l7 13h-14z`} fill="#6bbf45" />
      ))}
    </ArrowLayer>
  </Layer>
);

/* ---------- toolbars ---------- */

const TOOLS_A = ["file", "folder", "save", "print", "info", "user", "flask", "|", "copy", "paste", "undo", "redo", "|", "zoomIn", "zoomReset", "zoomOut", "windowBox", "listBox", "|", "tower", "cluster", "cloudBox"];
const TOOLS_B = ["select", "magnify", "erase", "resize", "|", "note", "stroke", "box", "oval", "blob", "|", "mail", "mailOpen"];
const MENUS = ["File", "Edit", "Options", "View", "Tools", "Extensions", "Window", "Help"];

const Tools = ({ names }) =>
  names.map((n, i) =>
    n === "|" ? <Divider key={i} /> : <Tool key={i} $on={n === "select"}><Glyph name={n} /></Tool>
  );

const RootLabel = styled.span`
  margin-right: 3px;
`;

const NavRight = ({ env }) => (
  <>
    <RootLabel>Root</RootLabel>
    <NavButton $grey>
      <svg width="20" height="20" viewBox="0 0 20 20" fill="none" stroke="#fff" strokeWidth="2.500"><path d="M4 7h7c6 0 6 9 0 9M8 2L3 7l5 5" /></svg>
    </NavButton>
    <NavButton>
      <svg width="22" height="22" viewBox="0 0 22 22"><path d="M2 13c-1-4 3-5 4-5 1-8 11-7 11 0 5 1 4 7 0 7H5z" fill="#fff" /><path d="M11 17h9M15.500 13v9" stroke="#fff" strokeWidth="2" /></svg>
    </NavButton>
    <NavButton $grey>
      <svg width="22" height="22" viewBox="0 0 22 22" fill="#fff"><path d="M11 0l4 5H7zM11 22l4-5H7zM0 11l5-4v8zM22 11l-5-4v8z" /><circle cx="11" cy="11" r="2.500" /></svg>
    </NavButton>
    <NavButton>
      <svg width="22" height="20" viewBox="0 0 22 20" fill="#fff"><path d="M1 18L8 6l5 8 3-4 5 8z" /><circle cx="16" cy="4" r="2.800" /></svg>
    </NavButton>
    <EnvClock>
      <svg width="22" height="24" viewBox="0 0 22 24" fill="#fff"><circle cx="9" cy="15" r="6.500" /><path d="M3 15h12M9 9v12M5 10c2 4 2 7 0 10M13 10c-2 4-2 7 0 10" stroke={NAVY} fill="none" /><path d="M11 3h9M13 6h9" stroke="#fff" strokeWidth="1.500" /></svg>
      {env}
    </EnvClock>
  </>
);

/* ---------- bottom ---------- */

const DEVICES = ["4331", "4321", "1941", "2901", "2911", "819IOX", "819HGW", "829", "1240", "PT-Router", "PT-Empty", "1841", "2620XM", "2621XM", "2811"];
const PDU_COLS = ["Fire", "Last Status", "Source", "Destination", "Type", "Color", "Time(sec)", "Periodic", "Num", "Edit", "Delete"];
const PDUS = [
  { on: true, dot: "#a02c50", edge: "#1b2a55", dst: "Laptop1", color: "#b95350", sec: "0.000", num: "0" },
  { on: false, dot: "#e80505", edge: "#200000", dst: "192.168.1...", color: "#39c93b", sec: "3.487", num: "1" },
];

const BottomPanel = () => (
  <Bottom>
    <Palette>
      <PaletteRow>{PALETTE_TOP.map((a, i) => <PaletteCell key={i} $on={i === 0}>{a}</PaletteCell>)}</PaletteRow>
      <PaletteField />
      <PaletteRow>{PALETTE_LOW.map((a, i) => <PaletteCell key={i} $on={i === 0}>{a}</PaletteCell>)}</PaletteRow>
    </Palette>
    <Devices>
      <Tiles>
        {DEVICES.map((d) => (
          <Tile key={d} $tight={d.startsWith("PT")}>
            <RouterArt />
            {d}
          </Tile>
        ))}
      </Tiles>
      <HScroll $h={20}>
        <Chevron dir="left" />
        <HThumb $w={121} />
        <Chevron dir="right" />
      </HScroll>
      <Hint>(Select a Device to Drag and Drop to the Workspace)</Hint>
    </Devices>
    <Splitter><svg width="8" height="12"><path d="M0 0l7 6-7 6z" fill="#555" /></svg></Splitter>
    <Scenario>
      <ScenarioRow $gap={10}>
        <InfoButton>
          <svg width="20" height="20" viewBox="0 0 20 20"><circle cx="10" cy="10" r="9.500" fill="#fff" /><path d="M9 5h2v2.500H9zM9 8.500h2V15H9z" fill={NAVY} /></svg>
        </InfoButton>
        <Select $w={92} $white>Scenario 0 <Chevron /></Select>
      </ScenarioRow>
      <ScenarioRow $gap={24}>
        <NavyButton>New</NavyButton>
        <NavyButton>Delete</NavyButton>
      </ScenarioRow>
      <NavyButton>Toggle PDU List Window</NavyButton>
    </Scenario>
    <Pdu>
      <PduRow>{PDU_COLS.map((c) => <PduHead key={c}>{c}</PduHead>)}</PduRow>
      {PDUS.map((p) => (
        <PduRow key={p.num}>
          <FireCell $on={p.on}><FireDot $c={p.dot} $edge={p.edge} /></FireCell>
          <span>--</span>
          <span>Laptop0</span>
          <span>{p.dst}</span>
          <span>ICMP</span>
          <Swatch $c={p.color} />
          <span>{p.sec}</span>
          <span>N</span>
          <span>{p.num}</span>
          <span>(edit)</span>
          <span>(delete)</span>
        </PduRow>
      ))}
    </Pdu>
  </Bottom>
);

/* ---------- taskbar ---------- */

const Badge = () => (
  <>
    <circle cx="33" cy="27" r="10.500" fill="#3b4248" stroke="#c9c9c9" />
    <text x="33" y="32" fontSize="13.500" fontWeight="bold" textAnchor="middle" fill="#fff" fontFamily="Open Sans">22</text>
  </>
);

const APPS = [
  { k: "cortana", art: <svg width="22" height="22"><circle cx="11" cy="11" r="8.500" fill="none" stroke="#fff" strokeWidth="2.600" /></svg> },
  { k: "tasks", art: <svg width="20" height="20" fill="none" stroke="#fff" strokeWidth="1.500"><path d="M2 5h10v9H2zM2 0v2h10V0M2 20v-2h10v2M17 1v4M17 8v3M17 14v5" /></svg> },
  { k: "store", art: <svg width="28" height="30" viewBox="0 0 28 30"><path d="M7 9V1h14v8" fill="none" stroke="#fff" strokeWidth="2" /><path d="M0 8h28v21H0z" fill="#fff" /><path d="M8 13h5.500v5.500H8z" fill="#f25022" /><path d="M14.500 13H20v5.500h-5.500z" fill="#7fba00" /><path d="M8 19.500h5.500V25H8z" fill="#00a4ef" /><path d="M14.500 19.500H20V25h-5.500z" fill="#ffb900" /></svg> },
  { k: "fox", art: <svg width="29" height="30" viewBox="0 0 29 30"><path d="M3 7l2 3 3-5 3 4C13 4 15 3 16 0c4 4 12 8 12 17a13.500 13 0 0 1-27 0C1 13 2 10 3 7z" fill="#ff6a2a" /><path d="M16 0c4 4 12 8 12 17 0 5-4 9-7 11 2-8 0-14-6-17z" fill="#ffc928" /><circle cx="14" cy="17" r="6.500" fill="#6a3fd0" /><path d="M5 24c5 5 13 5 17 1l-9-3z" fill="#ff2f60" /></svg> },
  { k: "tv", art: <svg width="32" height="24"><path d="M0 6h4M5 6h3M9 6h3M0 11h4M5 11h3M9 11h3" stroke="#e3173e" strokeWidth="2.600" /><text x="13" y="15" fontSize="14" fontWeight="bold" fill="#eee" fontFamily="Liberation Sans">TV</text><path d="M14 18h15" stroke="#888" strokeWidth="1.500" /></svg> },
  { k: "files", art: <svg width="28" height="24" viewBox="0 0 28 24"><path d="M0 1h11l2 3h15v19H0z" fill="#f0b429" /><path d="M0 7h28v16H0z" fill="#ffd765" /><path d="M6 23v-9h16v9h-5v-4h-6v4z" fill="#3a93dd" /></svg> },
  { k: "netflix", art: <svg width="30" height="30"><path d="M0 0h30v30H0z" fill="#000" /><text x="15" y="24" fontSize="25" fontWeight="bold" textAnchor="middle" fill="#d8101b" textLength="13" lengthAdjust="spacingAndGlyphs" fontFamily="Liberation Sans">N</text></svg> },
  { k: "chrome", open: true, art: <svg width="30" height="30" viewBox="0 0 30 30"><circle cx="15" cy="15" r="14.500" fill="#e33b2e" /><path d="M2 8l8 14 5 7.500A14.500 14.500 0 0 1 2 8z" fill="#2ba24c" /><path d="M15 29.500l7-12V8h6.500A14.500 14.500 0 0 1 15 29.500z" fill="#fbc116" /><circle cx="15" cy="15" r="7" fill="#fff" /><circle cx="15" cy="15" r="5.500" fill="#1a73e8" /></svg> },
  { k: "mail", art: null },
  { k: "word", art: <svg width="28" height="26" viewBox="0 0 28 26"><path d="M14 3h13v20H14z" fill="#fff" stroke="#2b579a" /><path d="M17 7h8M17 10h8M17 13h8M17 16h8M17 19h8" stroke="#2b579a" strokeWidth="1.500" /><path d="M0 3l16-3v26L0 23z" fill="#2b579a" /><text x="8" y="17" fontSize="11" fontWeight="bold" textAnchor="middle" fill="#fff" fontFamily="Liberation Sans">W</text></svg> },
  { k: "paint", open: true, art: <svg width="30" height="30" viewBox="0 0 30 30"><path d="M4 12C9 3 23 4 26 13c2 6-3 4-4 8-1 7-12 9-17 3-4-4-3-8-1-12z" fill="#a9d4ea" /><circle cx="9" cy="14" r="2.500" fill="#e43" /><circle cx="15" cy="10" r="2.500" fill="#3b5" /><circle cx="8" cy="21" r="2.300" fill="#37c" /><path d="M28 0l-9 16-6 12" stroke="#c5833c" strokeWidth="3" /></svg> },
  { k: "discord", open: true, art: <svg width="32" height="30" viewBox="0 0 32 30"><circle cx="15" cy="14" r="14" fill="#5865f2" /><path d="M7 19c0-5 1-8 3-10h10c2 2 3 5 3 10-3 2-5 1-6-1h-4c-1 2-3 3-6 1z" fill="#fff" /><circle cx="22" cy="21" r="8" fill="#e64545" /><circle cx="22" cy="21" r="3" fill="#fff" /></svg> },
];

const MailSvg = styled.svg`
  margin-right: -10px;
`;

const MailArt = ({ badge }) => (
  <MailSvg width="44" height="38" viewBox="0 0 44 38">
    <path d="M0 13L15 2l15 11v18H0z" fill="#1272c4" />
    <path d="M3 13h24v10H3z" fill="#e9f5ff" />
    <path d="M0 13l15 10 15-10v18H0z" fill="#37aef2" />
    {badge && <Badge />}
  </MailSvg>
);

const TaskbarView = ({ clock, badge, glow }) => (
  <Taskbar $glow={glow}>
    <StartCell>
      <svg width="21" height="20" viewBox="0 0 21 20" fill="#fff"><path d="M0 3l9-1.300V9.500H0zM10 1.500L21 0v9.500H10zM0 10.500h9v8L0 17zM10 10.500h11V20l-11-1.500z" /></svg>
    </StartCell>
    <SearchCell>
      <svg width="22" height="22" fill="none" stroke="#333" strokeWidth="1.600"><circle cx="13" cy="8" r="6.500" /><path d="M9 13L2 21" /></svg>
      Cerca
    </SearchCell>
    {APPS.map((a) => (
      <AppCell key={a.k} $open={a.open}>{a.k === "mail" ? <MailArt badge={badge} /> : a.art}</AppCell>
    ))}
    <AppCell $w={56} $open $front><AppLogo w={28} h={31} /></AppCell>
    <Tray>
      <svg width="29" height="10" fill="none" stroke="#fff" strokeWidth="1.400"><path d="M1 9l6.500-7L14 9" /></svg>
      <svg width="30" height="18" fill="none" stroke="#fff" strokeWidth="1.200"><path d="M1 1h28v16H1z" /><path d="M4 5.500h22M4 9h22M8 13h14" strokeDasharray="2.500 2" /></svg>
      <Clock><span>{clock}</span><span>06/06/2023</span></Clock>
      <svg width="34" height="34" viewBox="0 0 34 34"><path d="M4 4h19v17h-9l-4 4v-4H4z" fill="#fff" /><path d="M7 8.500h13M7 12h13M7 15.500h9" stroke="#2a2f35" strokeWidth="1.300" /><circle cx="23" cy="23" r="9.500" fill="#32383e" stroke="#bbb" /><text x="23" y="28" fontSize="13" textAnchor="middle" fill="#fff" fontFamily="Open Sans">1</text></svg>
    </Tray>
  </Taskbar>
);

/* ---------- dialog parts ---------- */

const Check = ({ on }) => (
  <CheckBox>{on && <svg width="11" height="11" fill="none" stroke="#111" strokeWidth="1.500"><path d="M1 5l3.500 4L10 1" /></svg>}</CheckBox>
);

const SidePanel = ({ items, heads, mark, look, w, h }) => (
  <Side $w={w} $h={h}>
    <SideList>
      {items.map((t) => (
        <SideItem key={t} $head={heads.includes(t)} $look={t === mark ? look : null}>{t}</SideItem>
      ))}
    </SideList>
    <VScroll $w={21}><Chevron dir="up" color="#b5b5b5" /><Chevron dir="down" color="#b5b5b5" /></VScroll>
  </Side>
);

const CONFIG_ITEMS = ["GLOBAL", "Settings", "Algorithm Settings", "INTERFACE", "FastEthernet0"];
const SERVICES = ["SERVICES", "HTTP", "DHCP", "DHCPv6", "TFTP", "DNS", "SYSLOG", "AAA", "NTP", "EMAIL", "FTP", "IoT", "VM Management", "Radius EAP"];

const ConfigSide = ({ extra = [], mark, look }) => (
  <SidePanel items={[...CONFIG_ITEMS, ...extra]} heads={["GLOBAL", "INTERFACE"]} mark={mark} look={look} w={162} h={720} />
);

const ServiceSide = ({ mark, look }) => (
  <SidePanel items={SERVICES} heads={["SERVICES"]} mark={mark} look={look} w={151} h={752} />
);

const Dialog = ({ x, y, title, tabs, active, focus, web, children }) => {
  const Body = web ? WebContent : Content;
  return (
    <DialogBox $x={x} $y={y}>
      <DialogTitle>
        <AppLogo />
        <TitleText>{title}</TitleText>
        <WindowControls color="#111" gap={46} />
      </DialogTitle>
      <TabBar>
        {tabs.map((t) => (
          <Tab key={t} $on={t === active}><TabLabel $focus={focus && t === active}>{t}</TabLabel></Tab>
        ))}
      </TabBar>
      <Body>{children}</Body>
      <TopRow><CheckBox />Top</TopRow>
    </DialogBox>
  );
};

const GatewayGroup = ({ name, first, chosen, gateway, dim, mt }) => (
  <Group $h={151} $m={`${mt}px 0 0`} $p="11px 11px 0 10.500px">
    <Line $h={16}>{name}</Line>
    <Line $h={20} $mt={6} $gap={7}><Radio $on={chosen === 0} />{first}</Line>
    <Line $h={20} $mt={6} $gap={7}><Radio $on={chosen === 1} />Static</Line>
    <Line $h={23} $mt={7}><Label $w={101.5}>Default Gateway</Label><Field $dim={dim}>{gateway}</Field></Line>
    <Line $h={23} $mt={6}><Label $w={101.5}>DNS Server</Label><Field $dim={dim} /></Line>
  </Group>
);

const GlobalSettings = ({ name, iface, chosen, gateway, dim }) => (
  <SettingsPanel>
    <Heading $h={41} $pt={13}>Global Settings</Heading>
    <Line $h={24} $mt={14}><Label $w={87}>Display Name</Label><Field>{name}</Field></Line>
    {iface && <Line $h={21} $mt={4}><Label $w={87}>Interfaces</Label><Select>{iface}<Chevron size={8} /></Select></Line>}
    <GatewayGroup name="Gateway/DNS IPv4" first="DHCP" chosen={chosen} gateway={gateway} dim={dim} mt={6} />
    <GatewayGroup name="Gateway/DNS IPv6" first="Automatic" chosen={1} mt={7} />
  </SettingsPanel>
);

const PortSettings = ({ mac, dhcp, ip, mask, link, caret }) => (
  <PortPanel>
    <PortHeading>FastEthernet0</PortHeading>
    <Line $h={20} $gap={5}><Label>Port Status</Label><Push /><Check on /><Label $pr={5}>On</Label></Line>
    <Line $h={20} $gap={3}>
      <Label>Bandwidth</Label><Push />
      <Radio $on $dim /><Dim>100 Mbps</Dim><Radio $dim /><Dim>10 Mbps</Dim>
      <Check on /><Label $pr={5} $pl={2}>Auto</Label>
    </Line>
    <Line $h={20} $gap={3}>
      <Label>Duplex</Label><Push />
      <Radio $dim /><Dim>Half Duplex</Dim><Radio $on $dim /><Dim>Full Duplex</Dim>
      <Check on /><Label $pr={5} $pl={2}>Auto</Label>
    </Line>
    <Line $h={23}><Label $w={329}>MAC Address</Label><Field>{mac}</Field></Line>
    <Group $h={117} $m="5px 4px 0 4px" $p="6px 10px 0 11px">
      <Line $h={16}>IP Configuration</Line>
      <Line $h={20} $gap={6}><Radio $on={dhcp} />DHCP</Line>
      <Line $h={20} $gap={6}><Radio $on={!dhcp} />Static</Line>
      <Line $h={24}><Label $w={313}>IPv4 Address</Label><Field $dim={dhcp}>{ip}</Field></Line>
      <Line $h={24}><Label $w={313}>Subnet Mask</Label><Field $dim={dhcp} $focus={caret}>{mask}</Field></Line>
    </Group>
    <Group $h={123} $m="0 4px" $p="6px 10px 0 11px">
      <Line $h={16}>IPv6 Configuration</Line>
      <Line $h={20} $gap={6}><Radio />Automatic</Line>
      <Line $h={20} $gap={6}><Radio $on />Static</Line>
      <Line $h={24}><Label $w={114}>IPv6 Address</Label><Field /><span>/</span><Field $w={80} /></Line>
      <Line $h={24}><Label $w={114}>Link Local Address:</Label><Field>{link}</Field></Line>
    </Group>
  </PortPanel>
);

const POOLS = [
  ["serverPool1", "0.0.0.0", "192.168.2.1", "192.168.1.2", "0.0.0.0", "512", "0.0.0.0", "0.0.0.0"],
  ["serverPool", "0.0.0.0", "0.0.0.0", "192.168.1.0", "255.255.2...", "512", "0.0.0.0", "0.0.0.0"],
];
const POOL_HEADS = ["Pool\nName", "Default\nGateway", "DNS\nServer", "Start\nIP\nAddress", "Subnet\nMask", "Max\nUser", "TFTP\nServer", "WLC\nAddress"];

const LabelledField = ({ label, value }) => (
  <Line $h={30}><Label $w={327}>{label}</Label><Field>{value}</Field></Line>
);

const DhcpService = () => (
  <ServicePanel>
    <Heading $h={34} $pt={11}>DHCP</Heading>
    <Line $h={27} $mt={6}>
      <Label $w={163}>Interface</Label><Select $w={158}>FastEthernet0<Chevron /></Select>
      <Label $w={55} $pl={6}>Service</Label><Radio />
      <Label $w={123} $pl={7}>On</Label><Radio $on /><Label $pl={7}>Off</Label>
    </Line>
    <LabelledField label="Pool Name" value="serverPool" />
    <LabelledField label="Default Gateway" value="0.0.0.0" />
    <LabelledField label="DNS Server" value="0.0.0.0" />
    <Line $h={30} $gap={6}><Label $w={102}>Start IP Address :</Label><Field>192</Field><Field>168</Field><Field>1</Field><Field>0</Field></Line>
    <Line $h={30} $gap={6}><Label $w={80}>Subnet Mask:</Label><Field>255</Field><Field>255</Field><Field>255</Field><Field>0</Field></Line>
    <LabelledField label="Maximum Number of Users :" value="512" />
    <LabelledField label="TFTP Server:" value="0.0.0.0" />
    <LabelledField label="WLC Address:" value="0.0.0.0" />
    <ButtonRow $mt={5}><Button>Add</Button><Button>Save</Button><Button $dim>Remove</Button></ButtonRow>
    <PoolTable>
      <PoolRow $h={57}>{POOL_HEADS.map((t) => <PoolHead key={t}>{t}</PoolHead>)}</PoolRow>
      {POOLS.map((r) => (
        <PoolRow key={r[0]} $h={37}>{r.map((c, i) => <PoolCell key={i}>{c}</PoolCell>)}</PoolRow>
      ))}
      <Push />
      <HScroll $h={20}><Chevron dir="left" /><HThumb $w={529} /><Chevron dir="right" /></HScroll>
    </PoolTable>
  </ServicePanel>
);

const DnsService = () => (
  <ServicePanel>
    <Heading $h={34} $pt={11}>DNS</Heading>
    <Line $h={34}>
      <Label $w={218}>DNS Service</Label><Radio $on /><Label $w={203} $pl={8}>On</Label>
      <Radio /><Label $pl={7}>Off</Label>
    </Line>
    <Rule />
    <Line $h={16} $mt={8}>Resource Records</Line>
    <Line $h={23} $mt={6}>
      <Label $w={164}>Name</Label><Field $w={158}>epicode.internal</Field><Push />
      <Label $w={34}>Type</Label><Select $w={158}>A Record<Chevron /></Select>
    </Line>
    <Line $h={7} />
    <Rule />
    <Line $h={23} $mt={8}><Label $w={54}>Address</Label><Field>192.168.3.1</Field></Line>
    <ButtonRow $mt={8}><Button>Add</Button><Button>Save</Button><Button>Remove</Button></ButtonRow>
    <RecordTable>
      <RecordRow $head><span>No.</span><span>Name</span><span>Type</span><span>Detail</span></RecordRow>
      <RecordRow><span>0</span><span>epicode.internal</span><span>A Record</span><span>192.168.3.1</span></RecordRow>
    </RecordTable>
    <Line $h={26}><Button $w={91} $h={26}>DNS Cache</Button></Line>
  </ServicePanel>
);

const HTML_SOURCE = `<html>
<center><font size='+2' color='blue'>epicode.internal</font></center>
<hr>Welcome to Cisco Packet Tracer. Opening doors to new opportunities. Mind Wide Open.
<p>Quick Links:
<br><a href='helloworld.html'>A small page</a>
<br><a href='copyrights.html'>Copyrights</a>
<br><a href='image.html'>Image page</a>
<br><a href='cscoptlogo177x111.jpg'>Image</a>
</html>`;

const Caret = styled.i`
  display: inline-block;
  width: 1.2px;
  height: 15px;
  vertical-align: -3px;
  background: #000;
`;

const HttpService = () => (
  <FilePanel>
    <Line $h={23}><Label $w={70}>File Name:</Label><Field>index.html</Field></Line>
    <Editor>{HTML_SOURCE}<Caret /></Editor>
    <Line $h={25} $gap={9}><Push /><Button $w={91}>File Manager</Button><Button $w={91}>Save</Button></Line>
  </FilePanel>
);

const Browser = () => (
  <>
    <WebTitle>Web Browser<Button $w={29} $h={26}>X</Button></WebTitle>
    <Line $h={28} $gap={7}>
      <Button $w={34}>&lt;</Button><Button $w={34}>&gt;</Button><Label $w={24}>URL</Label>
      <UrlField $focus>http://epicode.internal<Caret /></UrlField>
      <Button $w={92}>Go</Button><Button $w={92}>Stop</Button>
    </Line>
    <WebPage>Host Name Unresolved</WebPage>
  </>
);

const SERVER_TABS = ["Physical", "Config", "Services", "Desktop", "Programming", "Attributes"];
const LAPTOP_TABS = ["Physical", "Config", "Desktop", "Programming", "Attributes"];

/* ---------- one full screen ---------- */

const Screen = ({ x, y, main, coords, env, time, clock, badge = true, glow, dy = 0, picked, children }) => (
  <Shot $x={x} $y={y}>
    <TitleBar $active={main}>
      <AppLogo />
      <TitleText>Cisco Packet Tracer - C:\Users\gessi\Desktop\ex2.pkt</TitleText>
      <MainControls />
    </TitleBar>
    <MenuBar $active={main}>{MENUS.map((m) => <span key={m}>{m}</span>)}</MenuBar>
    <ToolRow><Tools names={TOOLS_A} /><HelpMark>?</HelpMark></ToolRow>
    <ToolRow><Tools names={TOOLS_B} /></ToolRow>
    <NavBar>
      <Pill $on $w={95} $gap={3}>
        <svg width="18" height="20" viewBox="0 0 18 20" fill="#fff"><circle cx="9" cy="4" r="3" /><circle cx="2.500" cy="12" r="2.500" /><circle cx="15" cy="15" r="3" /><path d="M3 12l6-8 6 11" fill="none" stroke="#fff" /></svg>
        Logical
      </Pill>
      <Pill $w={99} $gap={6}>
        <svg width="14" height="20" fill="none" stroke="#9fb0cc"><path d="M.5.5h13v19H.5zM0 5h14M0 10h14M0 15h14" /></svg>
        Physical
      </Pill>
      <Coords>{coords}</Coords>
      <NavRight env={env} />
    </NavBar>
    <WorkRow>
      <Canvas><Network dy={dy} picked={picked} /></Canvas>
      <VScroll><Chevron dir="up" /><VThumb /><Chevron /></VScroll>
    </WorkRow>
    <HScroll $h={21} $mr={21}><Chevron dir="left" /><HThumb $w={880} /><Chevron dir="right" /></HScroll>
    <TimeBar>
      <TimeText>Time: {time}</TimeText>
      <Pill $w={30}>
        <svg width="20" height="20" viewBox="0 0 20 20" fill="none" stroke="#fff" strokeWidth="2"><path d="M6 4a7.500 7.500 0 1 0 7 0M10 0v6M10 1L6 4l4 3" /><circle cx="10" cy="11" r="1" fill="#fff" stroke="none" /></svg>
      </Pill>
      <Pill $w={30}>
        <svg width="17" height="14" fill="#fff"><path d="M0 0l8 7-8 7zM8 0l9 7-9 7z" /></svg>
      </Pill>
      <TimeSpace />
      <Pill $on $w={110}>
        <svg width="21" height="21" viewBox="0 0 21 21"><circle cx="10.500" cy="10.500" r="10" fill="#fff" /><path d="M10 5v6l2 2" stroke={CYAN} strokeWidth="2" fill="none" /></svg>
        Realtime
      </Pill>
      <Pill $w={113}>
        <svg width="21" height="21" viewBox="0 0 21 21" fill="#fff"><path d="M6 10V5c0-6 9-6 9 0v5zM1 12h19v6H1z" /><path d="M3 20h15M10 6h4" stroke={NAVY} strokeWidth="1.500" /><circle cx="5" cy="19" r="2" /><circle cx="15" cy="19" r="2" /></svg>
        Simulation
      </Pill>
    </TimeBar>
    <BottomPanel />
    {children}
    <TaskbarView clock={clock} badge={badge} glow={glow} />
  </Shot>
);

export default function App() {
  return (
    <Page>
      <GlobalStyle />
      <Board>
        <Screen x={-11} y={-25} main dy={2} coords="x: 1422, y: 156" env="00:58:30" time="00:01:10" clock="21:38" />

        <Screen x={1654} y={-67} coords="x: 1887, y: 139" env="01:02:00" time="00:01:54" clock="21:39" badge={false} picked="Server0">
          <Dialog x={672} y={142} title="Server0" tabs={SERVER_TABS} active="Config" focus>
            <ConfigSide />
            <GlobalSettings name="Server0" chosen={1} gateway="192.168.1.1" />
          </Dialog>
        </Screen>

        <Screen x={3492} y={-36} coords="x: 1882, y: 122" env="01:22:30" time="00:02:41" clock="21:40" badge={false} picked="Server0">
          <Dialog x={672} y={141} title="Server0" tabs={SERVER_TABS} active="Services">
            <ServiceSide mark="DHCP" look="ring" />
            <DhcpService />
          </Dialog>
        </Screen>

        <Screen x={-221} y={1000} coords="x: 1850, y: 123" env="01:36:00" time="00:03:05" clock="21:40" picked="Laptop0">
          <Dialog x={672} y={141} title="Laptop0" tabs={LAPTOP_TABS} active="Config" focus>
            <ConfigSide extra={["Bluetooth"]} mark="FastEthernet0" look="blue" />
            <GlobalSettings name="Laptop0" iface="FastEthernet0" chosen={0} dim />
          </Dialog>
        </Screen>

        <Screen x={1680} y={1012} coords="x: 1798, y: 562" env="01:50:00" time="00:03:36" clock="21:41">
          <Dialog x={672} y={141} title="Laptop1" tabs={LAPTOP_TABS} active="Config">
            <ConfigSide extra={["Bluetooth"]} mark="FastEthernet0" look="ring" />
            <PortSettings dhcp mac="0001.C9A3.EC28" ip="169.254.236.40" mask="255.255.0.0" link="FE80::201:C9FF:FEA3:EC28" />
          </Dialog>
        </Screen>

        <Screen x={3536} y={1024} coords="x: 1375, y: 216" env="02:05:00" time="00:04:10" clock="21:41" picked="Server1">
          <Dialog x={48} y={148} title="Server1" tabs={SERVER_TABS} active="Config">
            <ConfigSide mark="FastEthernet0" look="ring" />
            <PortSettings mac="0001.C7E0.6B00" ip="192.168.2.1" mask="255.255.255.0" link="FE80::201:C7FF:FEE0:6B00" />
          </Dialog>
        </Screen>

        <Screen x={1728} y={2024} coords="x: 1794, y: 365" env="02:20:00" time="00:04:40" clock="21:42" glow>
          <Dialog x={672} y={203} title="Server2" tabs={SERVER_TABS} active="Services">
            <ServiceSide />
            <HttpService />
          </Dialog>
        </Screen>

        <Screen x={-184} y={2016} coords="x: 1563, y: 301" env="04:14:30" time="00:08:20" clock="21:46">
          <Dialog x={672} y={141} title="Server1" tabs={SERVER_TABS} active="Services">
            <ServiceSide mark="DNS" look="blue" />
            <DnsService />
          </Dialog>
        </Screen>

        <Screen x={3616} y={2048} coords="x: 693, y: 37" env="05:24:30" time="00:10:34" clock="21:48" glow>
          <Dialog x={672} y={203} title="Server2" tabs={SERVER_TABS} active="Config">
            <ConfigSide mark="FastEthernet0" look="blue" />
            <PortSettings caret mac="000C.855B.476A" ip="192.168.3.1" mask="255.255.255.0" link="FE80::20C:85FF:FE5B:476A" />
          </Dialog>
        </Screen>

        <Screen x={-17} y={3048} coords="x: 742, y: 521" env="06:12:00" time="00:12:10" clock="21:49">
          <Dialog x={672} y={141} title="Laptop1" tabs={LAPTOP_TABS} active="Desktop" web>
            <Browser />
          </Dialog>
        </Screen>
      </Board>
    </Page>
  );
}
